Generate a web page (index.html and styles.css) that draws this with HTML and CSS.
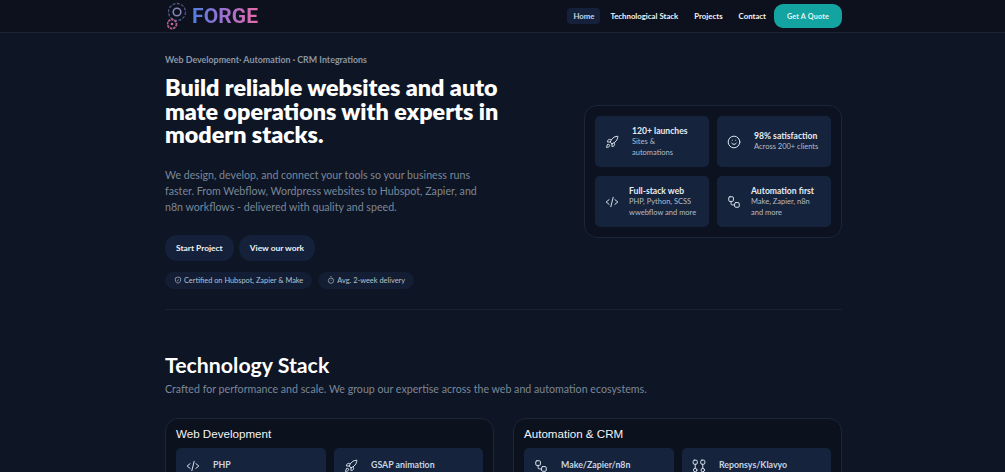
FILE: index.html
```html
<!DOCTYPE html>
<html lang="en">
<head>
    <meta charset="UTF-8">
    <meta name="viewport" content="width=device-width, initial-scale=1.0">
    <title>Forge</title>
    <link rel="stylesheet" href="styles.css">
</head>
<body>
    <svg class="icon-defs" width="0" height="0" aria-hidden="true">
        <symbol id="i-rocket" viewBox="0 0 24 24">
            <path d="M4.500 16.500c-1.500 1.300-2 5-2 5s3.700-.5 5-2c.7-.8.700-2.100-.1-2.900a2.200 2.200 0 0 0-2.900-.1z"/>
            <path d="M12 15l-3-3a22 22 0 0 1 2-3.950A12.900 12.900 0 0 1 22 2c0 2.700-.8 7.500-6 11a22 22 0 0 1-4 2z"/>
            <path d="M9 12H4s.55-3.030 2-4c1.620-1.080 5 0 5 0"/>
            <path d="M12 15v5s3.030-.55 4-2c1.080-1.620 0-5 0-5"/>
        </symbol>
        <symbol id="i-smile" viewBox="0 0 24 24">
            <circle cx="12" cy="12" r="10"/>
            <path d="M8 14s1.500 2 4 2 4-2 4-2"/>
            <path d="M9 9h.01M15 9h.01"/>
        </symbol>
        <symbol id="i-code" viewBox="0 0 24 24">
            <path d="M7 8l-5 4 5 4"/>
            <path d="M17 8l5 4-5 4"/>
            <path d="M14 4l-4 16"/>
        </symbol>
        <symbol id="i-flow" viewBox="0 0 24 24">
            <rect x="3" y="3" width="8" height="8" rx="2"/>
            <path d="M7 11v4a2 2 0 0 0 2 2h4"/>
            <rect x="13" y="13" width="8" height="8" rx="2"/>
        </symbol>
        <symbol id="i-split" viewBox="0 0 24 24">
            <rect x="2" y="2" width="7" height="7" rx="2"/>
            <path d="M5.500 9v7"/>
            <circle cx="5.500" cy="19" r="3"/>
            <rect x="15" y="2" width="7" height="7" rx="2"/>
            <path d="M18.500 9v7"/>
            <circle cx="18.500" cy="19" r="3"/>
        </symbol>
    </svg>

    <header class="topbar">
        <div class="topbar-inner">
            <a class="logo" href="#">
                <svg class="logo-mark" width="24" height="28" viewBox="0 0 24 28" fill="none">
                    <circle cx="10" cy="10" r="8.500" stroke="#4d5886" stroke-width="1.300" stroke-dasharray="3 1.400"/>
                    <circle cx="10" cy="10" r="3.800" stroke="#8286b8" stroke-width="1.600"/>
                    <circle cx="5" cy="22" r="4.500" stroke="#b0618c" stroke-width="1.800" stroke-dasharray="2.500 .8"/>
                    <circle cx="5" cy="22" r="1.300" fill="#c46a98"/>
                </svg>
                <span class="logo-text">FORGE</span>
            </a>
            <nav class="nav">
                <a class="nav-link active" href="#">Home</a>
                <a class="nav-link" href="#">Technological Stack</a>
                <a class="nav-link" href="#">Projects</a>
                <a class="nav-link" href="#">Contact</a>
                <a class="quote-btn" href="#">Get A Quote</a>
            </nav>
        </div>
    </header>

    <main class="container">
        <section class="hero">
            <div class="hero-copy">
                <p class="eyebrow">Web Development· Automation · CRM Integrations</p>
                <h1>Build reliable websites and auto<br>mate operations with experts in<br>modern stacks.</h1>
                <p class="lead">We design, develop, and connect your tools so your business runs faster. From Webflow, Wordpress websites to Hubspot, Zapier, and n8n workflows - delivered with quality and speed.</p>
                <div class="actions">
                    <a class="btn" href="#">Start Project</a>
                    <a class="btn" href="#">View our work</a>
                </div>
                <div class="badges">
                    <span class="badge">
                        <svg class="badge-icon" viewBox="0 0 24 24"><path d="M12 3l8 3v6c0 5-3.500 8-8 9.500C7.500 20 4 17 4 12V6z"/><path d="M9 12l2 2 4-4"/></svg>
                        Certified on Hubspot, Zapier &amp; Make
                    </span>
                    <span class="badge">
                        <svg class="badge-icon" viewBox="0 0 24 24"><circle cx="12" cy="14" r="8"/><path d="M12 14l3-3M10 2h4"/></svg>
                        Avg. 2-week delivery
                    </span>
                </div>
            </div>
            <div class="stats-panel">
                <div class="stat">
                    <svg class="icon"><use href="#i-rocket"/></svg>
                    <div><div class="stat-title">120+ launches</div><div class="stat-sub">Sites &amp;<br>automations</div></div>
                </div>
                <div class="stat">
                    <svg class="icon"><use href="#i-smile"/></svg>
                    <div><div class="stat-title">98% satisfaction</div><div class="stat-sub">Across 200+ clients</div></div>
                </div>
                <div class="stat stat-tight">
                    <svg class="icon"><use href="#i-code"/></svg>
                    <div><div class="stat-title">Full-stack web</div><div class="stat-sub">PHP, Python, SCSS<br>wwebflow and more</div></div>
                </div>
                <div class="stat stat-tight">
                    <svg class="icon"><use href="#i-flow"/></svg>
                    <div><div class="stat-title">Automation first</div><div class="stat-sub">Make, Zapier, n8n<br>and more</div></div>
                </div>
            </div>
        </section>

        <section class="stack">
            <h2>Technology Stack</h2>
            <p class="stack-sub">Crafted for performance and scale. We group our expertise across the web and automation ecosystems.</p>
            <div class="stack-grid">
                <div class="stack-card">
                    <h3>Web Development</h3>
                    <div class="tool-grid">
                        <div class="tool"><svg class="icon"><use href="#i-code"/></svg>PHP</div>
                        <div class="tool"><svg class="icon"><use href="#i-rocket"/></svg>GSAP animation</div>
                    </div>
                </div>
                <div class="stack-card">
                    <h3>Automation &amp; CRM</h3>
                    <div class="tool-grid">
                        <div class="tool"><svg class="icon"><use href="#i-flow"/></svg>Make/Zapier/n8n</div>
                        <div class="tool"><svg class="icon"><use href="#i-split"/></svg>Reponsys/Klavyo</div>
                    </div>
                </div>
            </div>
        </section>
    </main>
</body>
</html>
```

FILE: styles.css
```css
* {
    box-sizing: border-box;
}

html, body {
    height: 472px;
    overflow: hidden;
}

body {
    font-family: 'Lato', sans-serif;
    background-color: #0e1524;
    color: #ffffff;
    margin: 0;
}

a {
    color: inherit;
    text-decoration: none;
}

.icon-defs {
    position: absolute;
}

/* Top bar */
.topbar {
    height: 33px;
    background-color: #0c111d;
    border-bottom: 1px solid #1e2635;
}

.topbar-inner {
    width: 677px;
    height: 32px;
    margin-left: 165px;
    display: flex;
    justify-content: space-between;
    align-items: center;
}

.logo {
    display: flex;
    align-items: center;
    gap: 1px;
    margin-left: 2px;
}

.logo-text {
    font-family: 'Roboto', sans-serif;
    font-size: 21px;
    font-weight: 700;
    letter-spacing: .1px;
    background: linear-gradient(90deg, #4f7fe0, #a070d0 50%, #e86aa8);
    -webkit-background-clip: text;
    background-clip: text;
    color: transparent;
}

.nav {
    display: flex;
    align-items: center;
}

.nav-link {
    font-size: 7.800px;
    font-weight: 700;
    padding: 3px 6px;
    margin-right: 4px;
    border-radius: 4px;
    color: #f1f4f8;
}

.nav-link.active {
    background-color: #15213a;
    color: #c8d4e6;
}

.nav-link:nth-child(4) {
    margin-right: 2px;
}

.quote-btn {
    width: 68px;
    height: 24px;
    display: flex;
    align-items: center;
    justify-content: center;
    background-color: #13a3a0;
    border-radius: 9px;
    font-size: 7.200px;
    font-weight: 700;
    letter-spacing: .2px;
    color: #e4f6f5;
}

/* Main column */
.container {
    width: 677px;
    margin-left: 165px;
}

.hero {
    display: flex;
    justify-content: space-between;
    height: 277px;
    border-bottom: 1px solid #1a2231;
}

.hero-copy {
    width: 345px;
    padding-top: 20px;
}

.eyebrow {
    margin: 0;
    font-size: 8.900px;
    line-height: 13px;
    font-weight: 700;
    color: #8b95a5;
}

h1 {
    margin: 10px 0 0;
    font-size: 23.300px;
    line-height: 23.500px;
    font-weight: 800;
    white-space: nowrap;
}

.lead {
    margin: 20px 0 0;
    font-size: 10.650px;
    line-height: 16px;
    color: #7b8798;
    width: 322px;
}

.actions {
    display: flex;
    gap: 5px;
    margin-top: 20px;
}

.btn {
    height: 26px;
    padding: 0 11px;
    display: flex;
    align-items: center;
    background-color: #15213a;
    border-radius: 12px;
    font-size: 8.400px;
    font-weight: 700;
    color: #eef2f7;
}

.badges {
    display: flex;
    gap: 6px;
    margin-top: 11px;
}

.badge {
    height: 17px;
    padding: 0 9px;
    display: flex;
    align-items: center;
    gap: 2px;
    background-color: #131d33;
    border-radius: 9px;
    font-size: 7.400px;
    color: #b6c0ce;
}

.badge-icon {
    width: 8px;
    height: 8px;
    fill: none;
    stroke: #b6c0ce;
    stroke-width: 2;
}

.icon {
    width: 14px;
    height: 14px;
    flex: none;
    fill: none;
    stroke: #dbe3ee;
    stroke-width: 1.700;
    stroke-linecap: round;
    stroke-linejoin: round;
}

/* Stats on the right */
.stats-panel {
    width: 258px;
    height: 133px;
    margin-top: 72px;
    padding: 10px;
    display: grid;
    grid-template-columns: 114px 114px;
    grid-template-rows: 51px 51px;
    gap: 9px 8px;
    background-color: #0c121f;
    border: 1px solid #1c2636;
    border-radius: 13px;
}

.stat {
    display: flex;
    align-items: center;
    gap: 13px;
    padding-left: 10px;
    background-color: #15233c;
    border-radius: 5px;
}

.stat-tight {
    gap: 10px;
}

.stat-title {
    font-size: 8.600px;
    line-height: 12px;
    font-weight: 700;
    color: #e6ebf2;
    white-space: nowrap;
}

.stat-sub {
    font-size: 7.500px;
    line-height: 10.500px;
    color: #b3bdcb;
    white-space: nowrap;
}

/* Technology stack */
.stack {
    padding-top: 42px;
}

h2 {
    margin: 0;
    font-size: 21.300px;
    line-height: 27px;
    font-weight: 700;
}

.stack-sub {
    margin: 2px 0 0;
    font-size: 10.650px;
    line-height: 16px;
    color: #7b8798;
}

.stack-grid {
    display: grid;
    grid-template-columns: 329px 329px;
    gap: 19px;
    margin-top: 21px;
}

.stack-card {
    height: 120px;
    padding: 8px 10px;
    background-color: #0b111d;
    border: 1px solid #1c2636;
    border-radius: 13px;
}

h3 {
    margin: 0;
    font-family: 'Liberation Sans', sans-serif;
    font-size: 11.600px;
    line-height: 14px;
    font-weight: 400;
    color: #f2f4f7;
}

.tool-grid {
    display: grid;
    grid-template-columns: 150px 149px;
    gap: 8px;
    margin-top: 7px;
}

.tool {
    height: 51px;
    padding: 11px 10px 0;
    display: flex;
    align-items: flex-start;
    gap: 13px;
    background-color: #15233c;
    border-radius: 5px;
    font-size: 8.800px;
    font-weight: 700;
    color: #c9d3e0;
}
```
